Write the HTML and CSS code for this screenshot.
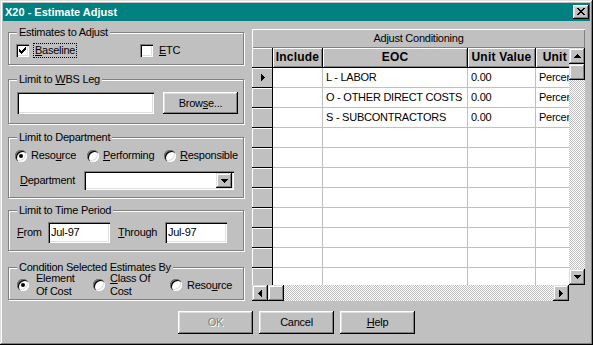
FILE: index.html
```html
<!DOCTYPE html>
<html>
<head>
<meta charset="utf-8">
<title>X20 - Estimate Adjust</title>
<link rel="stylesheet" href="styles.css">
</head>
<body>
<div class="window">
  <div class="titlebar">
    <span class="title">X20 - Estimate Adjust</span>
    <button class="close" aria-label="Close"><svg width="8" height="7" viewBox="0 0 8 7"><path d="M0 0h2v1H0z M6 0h2v1H6z M1 1h2v1H1z M5 1h2v1H5z M2 2h4v1H2z M3 3h2v1H3z M2 4h4v1H2z M1 5h2v1H1z M5 5h2v1H5z M0 6h2v1H0z M6 6h2v1H6z"/></svg></button>
  </div>

  <div class="main">
    <div class="left">
      <fieldset class="group g1">
        <legend>Estimates to Adjust</legend>
        <div class="row checks">
          <label class="check check-first"><span class="box"><svg width="7" height="7" viewBox="0 0 7 7"><path d="M6 0h1v1H6z M5 1h2v1H5z M0 2h1v1H0z M4 2h3v1H4z M0 3h2v1H0z M3 3h3v1H3z M0 4h5v1H0z M1 5h3v1H1z M2 6h1v1H2z"/></svg></span><span class="lbl focus"><u>B</u>aseline</span></label>
          <label class="check"><span class="box"></span><span class="lbl"><u>E</u>TC</span></label>
        </div>
      </fieldset>

      <fieldset class="group g2">
        <legend>Limit to <u>W</u>BS Leg</legend>
        <div class="row wbs">
          <div class="field wbs-field"></div>
          <button class="btn browse">Brow<u>s</u>e...</button>
        </div>
      </fieldset>

      <fieldset class="group g3">
        <legend>Limit to Department</legend>
        <div class="row radios dept-radios">
          <label class="opt opt-a"><span class="radio on"></span><span class="lbl">Reso<u>u</u>rce</span></label>
          <label class="opt opt-b"><span class="radio"></span><span class="lbl"><u>P</u>erforming</span></label>
          <label class="opt"><span class="radio"></span><span class="lbl"><u>R</u>esponsible</span></label>
        </div>
        <div class="row dept">
          <span class="dept-label"><u>D</u>epartment</span>
          <div class="field combo">
            <span class="combo-btn"><svg width="7" height="4" viewBox="0 0 7 4"><path d="M0 0h7v1H6v1H5v1H4v1H3V3H2V2H1V1H0z"/></svg></span>
          </div>
        </div>
      </fieldset>

      <fieldset class="group g4">
        <legend>Limit to Time Period</legend>
        <div class="row period">
          <span class="from-label"><u>F</u>rom</span>
          <div class="field date">Jul-97</div>
          <span class="through-label"><u>T</u>hrough</span>
          <div class="field date">Jul-97</div>
        </div>
      </fieldset>

      <fieldset class="group g5">
        <legend>Condition Selected Estimates By</legend>
        <div class="row radios cond">
          <label class="opt cond-a"><span class="radio on"></span><span class="lbl lbl-wide">Element<br>Of Cost</span></label>
          <label class="opt cond-b"><span class="radio"></span><span class="lbl"><u>C</u>lass Of<br>Cost</span></label>
          <label class="opt"><span class="radio"></span><span class="lbl">Reso<u>u</u>rce</span></label>
        </div>
      </fieldset>
    </div>

    <div class="grid">
      <div class="caption">Adjust Conditioning</div>
      <div class="grid-body">
        <div class="grid-main">
          <div class="table-wrap">
            <div class="table">
              <div class="rh"></div><div class="ch">Include</div><div class="ch">EOC</div><div class="ch">Unit Value</div><div class="ch">Unit Type</div>

              <div class="rh current"><svg width="4" height="7" viewBox="0 0 4 7"><path d="M0 0h1v1h1v1h1v1h1v1H3v1H2v1H1v1H0z"/></svg></div><div class="td"></div><div class="td">L - LABOR</div><div class="td">0.00</div><div class="td">Percent</div>
              <div class="rh"></div><div class="td"></div><div class="td">O - OTHER DIRECT COSTS</div><div class="td">0.00</div><div class="td">Percent</div>
              <div class="rh"></div><div class="td"></div><div class="td">S - SUBCONTRACTORS</div><div class="td">0.00</div><div class="td">Percent</div>
              <div class="rh"></div><div class="td"></div><div class="td"></div><div class="td"></div><div class="td"></div>
              <div class="rh"></div><div class="td"></div><div class="td"></div><div class="td"></div><div class="td"></div>
              <div class="rh"></div><div class="td"></div><div class="td"></div><div class="td"></div><div class="td"></div>
              <div class="rh"></div><div class="td"></div><div class="td"></div><div class="td"></div><div class="td"></div>
              <div class="rh"></div><div class="td"></div><div class="td"></div><div class="td"></div><div class="td"></div>
              <div class="rh"></div><div class="td"></div><div class="td"></div><div class="td"></div><div class="td"></div>
              <div class="rh"></div><div class="td"></div><div class="td"></div><div class="td"></div><div class="td"></div>
              <div class="rh"></div><div class="td"></div><div class="td"></div><div class="td"></div><div class="td"></div>
            </div>
          </div>
          <div class="hscroll">
            <span class="sb-btn"><svg width="4" height="7" viewBox="0 0 4 7"><path d="M3 0h1v7H3V6H2V5H1V4H0V3h1V2h1V1h1z"/></svg></span>
            <span class="sb-btn thumb"></span>
            <span class="track"></span>
            <span class="sb-btn"><svg width="4" height="7" viewBox="0 0 4 7"><path d="M0 0h1v1h1v1h1v1h1v1H3v1H2v1H1v1H0z"/></svg></span>
          </div>
        </div>
        <div class="grid-side">
          <div class="vscroll">
            <span class="sb-btn"><svg width="7" height="4" viewBox="0 0 7 4"><path d="M3 0h1v1h1v1h1v1h1v1H0V3h1V2h1V1h1z"/></svg></span>
            <span class="sb-btn thumb"></span>
            <span class="track"></span>
            <span class="sb-btn"><svg width="7" height="4" viewBox="0 0 7 4"><path d="M0 0h7v1H6v1H5v1H4v1H3V3H2V2H1V1H0z"/></svg></span>
          </div>
          <div class="sb-corner"></div>
        </div>
      </div>
    </div>
  </div>

  <div class="actions">
    <button class="btn action disabled">OK</button>
    <button class="btn action">Cancel</button>
    <button class="btn action"><u>H</u>elp</button>
  </div>
</div>
</body>
</html>
```

FILE: styles.css
```css
* { box-sizing: border-box; }

html, body {
  margin: 0;
  padding: 0;
  background: #c0c0c0;
}

body {
  font-family: "Liberation Sans", Arial, sans-serif;
  font-size: 11px;
  line-height: 13px;
  letter-spacing: -0.25px;
  color: #000;
}

svg { display: block; shape-rendering: crispEdges; fill: #000; }
u { text-decoration: underline; text-underline-offset: 1px; }

.window {
  width: 593px;
  height: 345px;
  padding: 3px;
  background: #c0c0c0;
  box-shadow: inset -1px -1px #000, inset 1px 1px #dfdfdf, inset -2px -2px #808080, inset 2px 2px #fff;
  display: flex;
  flex-direction: column;
}

/* title bar */
.titlebar {
  height: 18px;
  background: #008080;
  display: flex;
  align-items: center;
  justify-content: space-between;
  padding: 0 1px 0 2px;
}
.title {
  color: #fff;
  font-weight: bold;
  letter-spacing: 0;
}
.close {
  width: 16px;
  height: 14px;
  border: 0;
  padding: 0;
  background: #c0c0c0;
  box-shadow: inset -1px -1px #000, inset 1px 1px #fff, inset -2px -2px #808080, inset 2px 2px #dfdfdf;
  display: flex;
  align-items: center;
  justify-content: center;
}
.close svg { margin: 0 0 1px 0; }

/* main area */
.main {
  display: flex;
  height: 280px;
  padding: 5px 5px 0 5px;
}
.left {
  width: 236px;
  display: flex;
  flex-direction: column;
}

.group {
  margin: 0;
  padding: 0;
  min-width: 0;
  border: 1px solid #808080;
  box-shadow: inset 1px 1px #fff, 1px 1px #fff;
}
.group legend {
  margin-left: 8px;
  padding: 0 2px;
  line-height: 13px;
  background: #c0c0c0;
}
.g1 { height: 39px; }
.g2 { height: 51px; margin-top: 8px; }
.g3 { height: 67px; margin-top: 7px; }
.g4 { height: 47px; margin-top: 6px; }
.g5 { height: 39px; margin-top: 10px; }

.row { display: flex; align-items: center; }

/* checkboxes */
.checks { margin-top: 4px; height: 15px; padding-left: 7px; }
.check { display: flex; align-items: center; }
.check-first { width: 124px; }
.box {
  width: 13px;
  height: 13px;
  background: #fff;
  box-shadow: inset 1px 1px #808080, inset 2px 2px #000, inset -1px -1px #fff, inset -2px -2px #dfdfdf;
  display: flex;
  align-items: center;
  justify-content: center;
}
.check .lbl { margin-left: 5px; padding: 0 1px; }
.focus { outline: 1px dotted #000; outline-offset: 0; }

/* sunken fields */
.field {
  background: #fff;
  box-shadow: inset 1px 1px #808080, inset 2px 2px #000, inset -1px -1px #fff, inset -2px -2px #dfdfdf;
}

/* buttons */
.btn {
  border: 0;
  padding: 0;
  margin: 0;
  font: inherit;
  letter-spacing: inherit;
  color: #000;
  background: #c0c0c0;
  box-shadow: inset -1px -1px #000, inset 1px 1px #fff, inset -2px -2px #808080, inset 2px 2px #dfdfdf;
}

.wbs { margin-top: 6px; padding-left: 8px; gap: 9px; }
.wbs-field { width: 137px; height: 22px; }
.browse { width: 75px; height: 22px; }

/* radios */
.radio {
  flex: none;
  position: relative;
  width: 12px;
  height: 12px;
  border-radius: 50%;
  background: #fff;
  box-shadow: inset 1px 1px #808080, inset 2px 2px #000, inset -1px -1px #fff, inset -2px -2px #dfdfdf;
}
.radio.on::after {
  content: "";
  position: absolute;
  left: 4px;
  top: 4px;
  width: 4px;
  height: 4px;
  border-radius: 50%;
  background: #000;
}
.opt { display: flex; align-items: center; }
.opt .lbl { margin-left: 4px; }

.dept-radios { margin-top: 5px; height: 13px; padding-left: 6px; }
.opt-a { width: 72px; }
.opt-b { width: 77px; }

.dept { margin-top: 9px; padding-left: 11px; height: 19px; }
.dept-label { width: 64px; }
.combo {
  width: 150px;
  height: 19px;
  display: flex;
  justify-content: flex-end;
  align-items: center;
  padding-right: 2px;
}
.combo-btn {
  width: 16px;
  height: 15px;
  background: #c0c0c0;
  box-shadow: inset -1px -1px #000, inset 1px 1px #dfdfdf, inset -2px -2px #808080, inset 2px 2px #fff;
  display: flex;
  align-items: center;
  justify-content: center;
}

.period { margin-top: 5px; padding-left: 8px; height: 21px; }
.from-label { width: 31px; }
.through-label { width: 47px; margin-left: 8px; }
.date { width: 62px; height: 21px; padding: 4px 0 0 3px; }

.cond { margin-top: -2px; padding-left: 8px; height: 26px; }
.cond-a { width: 76px; }
.cond-b { width: 77px; }
.cond .lbl { margin-left: 5px; }
.cond .lbl-wide { margin-left: 7px; }

/* data grid */
.grid {
  width: 333px;
  height: 272px;
  margin: 3px 0 0 8px;
  display: flex;
  flex-direction: column;
}
.caption {
  height: 19px;
  line-height: 19px;
  text-align: center;
  background: #c0c0c0;
  box-shadow: inset 1px 1px #fff, inset -1px -1px #808080;
}
.grid-body { display: flex; flex: 1; }
.grid-main { width: 317px; display: flex; flex-direction: column; }
.table-wrap { height: 237px; overflow: hidden; background: #fff; }
.table {
  display: grid;
  grid-template-columns: 21px 50px 145px 68px 70px;
  grid-auto-rows: 20px;
}
.ch {
  background: #c0c0c0;
  box-shadow: inset 1px 1px #fff, inset -1px -1px #808080;
  border-right: 1px solid #000;
  border-bottom: 1px solid #000;
  font-weight: bold;
  font-size: 12px;
  letter-spacing: 0.2px;
  text-align: center;
  line-height: 19px;
  white-space: nowrap;
  overflow: hidden;
}
.rh {
  background: #c0c0c0;
  box-shadow: inset 1px 1px #fff;
  border-right: 1px solid #000;
  border-bottom: 1px solid #000;
  display: flex;
  align-items: center;
  justify-content: center;
}
.rh.current svg { margin-left: 2px; }
.td {
  background: #fff;
  border-right: 1px solid #c0c0c0;
  border-bottom: 1px solid #c0c0c0;
  padding-left: 3px;
  line-height: 19px;
  white-space: nowrap;
  overflow: hidden;
}

.sb-btn {
  flex: none;
  width: 16px;
  height: 16px;
  background: #c0c0c0;
  box-shadow: inset -1px -1px #000, inset 1px 1px #dfdfdf, inset -2px -2px #808080, inset 2px 2px #fff;
  display: flex;
  align-items: center;
  justify-content: center;
}
.track {
  flex: 1;
  background: repeating-conic-gradient(#c0c0c0 0 25%, #fff 0 50%) 0 0 / 2px 2px;
}
.hscroll { height: 16px; display: flex; }
.grid-side { width: 16px; display: flex; flex-direction: column; }
.vscroll { height: 237px; display: flex; flex-direction: column; }
.sb-corner { flex: 1; background: #c0c0c0; }

/* bottom buttons */
.actions {
  display: flex;
  justify-content: center;
  gap: 6px;
  margin-top: 10px;
}
.action { width: 75px; height: 23px; }
.action.disabled {
  color: #808080;
  text-shadow: 1px 1px #fff;
}
```
